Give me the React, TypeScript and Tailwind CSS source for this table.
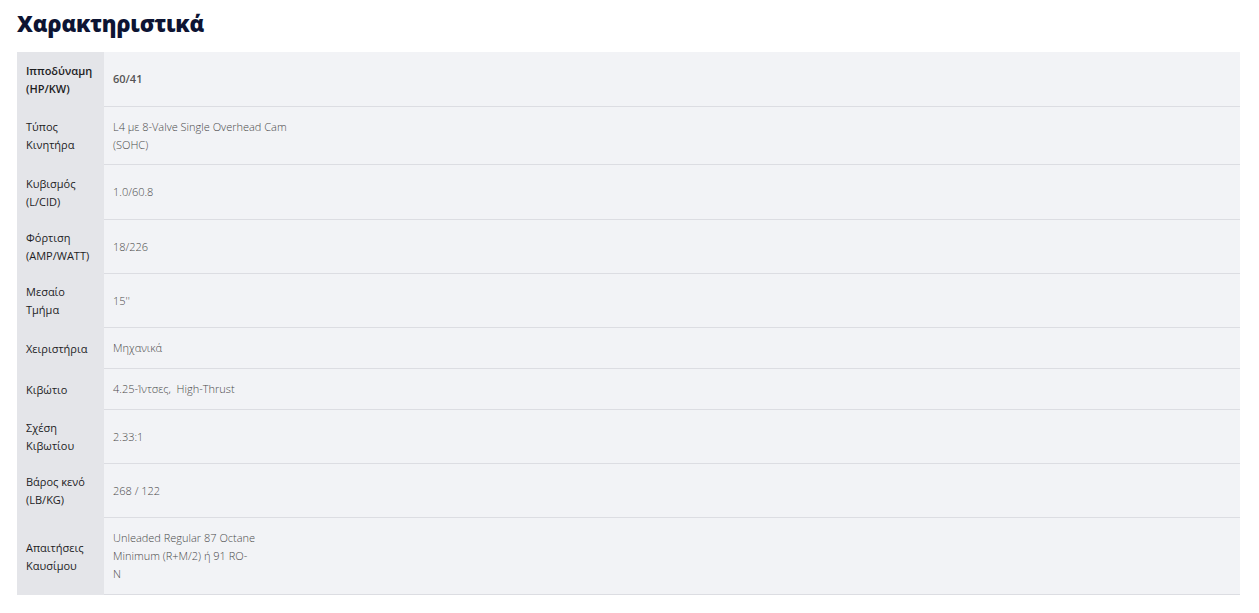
import React from "react";

type Row = { label: string[]; value: string[]; h: string; bold?: boolean };

const rows: Row[] = [
  { label: ["Ιπποδύναμη", "(HP/KW)"], value: ["60/41"], h: "h-[55px]", bold: true },
  { label: ["Τύπος", "Κινητήρα"], value: ["L4 με 8-Valve Single Overhead Cam", "(SOHC)"], h: "h-[58px]" },
  { label: ["Κυβισμός", "(L/CID)"], value: ["1.0/60.8"], h: "h-[55px]" },
  { label: ["Φόρτιση", "(AMP/WATT)"], value: ["18/226"], h: "h-[54px]" },
  { label: ["Μεσαίο", "Τμήμα"], value: ["15''"], h: "h-[54px]" },
  { label: ["Χειριστήρια"], value: ["Μηχανικά"], h: "h-[41px]" },
  { label: ["Κιβώτιο"], value: ["4.25-Ίντσες,  High-Thrust"], h: "h-[41px]" },
  { label: ["Σχέση", "Κιβωτίου"], value: ["2.33:1"], h: "h-[54px]" },
  { label: ["Βάρος κενό", "(LB/KG)"], value: ["268 / 122"], h: "h-[54px]" },
  { label: ["Απαιτήσεις", "Καυσίμου"], value: ["Unleaded Regular 87 Octane", "Minimum (R+M/2) ή 91 RO-", "N"], h: "h-[77px]" },
];

export default function App() {
  return (
    <div
      className="w-[1259px] h-[613px] bg-white pl-[17px] pr-[19px] pt-[8px]"
      style={{ fontFamily: "'Open Sans', 'Noto Sans', sans-serif" }}
    >
      <h2 className="text-[22px] leading-[30px] font-extrabold text-[#0d1433] tracking-[-0.2px]">
        Χαρακτηριστικά
      </h2>
      <div className="mt-[14px] flex flex-col">
        {rows.map((r, i) => (
          <div key={i} className={`flex ${r.h}`}>
            <div
              className={`w-[87px] shrink-0 bg-[#e4e5e9] pl-[9px] flex flex-col justify-center text-[11px] leading-[18px] text-[#1d1d1f] ${
                r.bold ? "font-semibold" : "font-normal"
              }`}
            >
              {r.label.map((l, j) => (
                <span key={j} className="whitespace-pre">{l}</span>
              ))}
            </div>
            <div
              className={`flex-1 bg-[#f2f3f6] border-b border-[#dcdde2] pl-[9px] flex flex-col justify-center text-[11px] leading-[18px] ${
                r.bold ? "font-semibold text-[#555]" : "font-light text-[#4a4a4a]"
              }`}
            >
              {r.value.map((v, j) => (
                <span key={j} className="whitespace-pre">{v}</span>
              ))}
            </div>
          </div>
        ))}
      </div>
    </div>
  );
}
